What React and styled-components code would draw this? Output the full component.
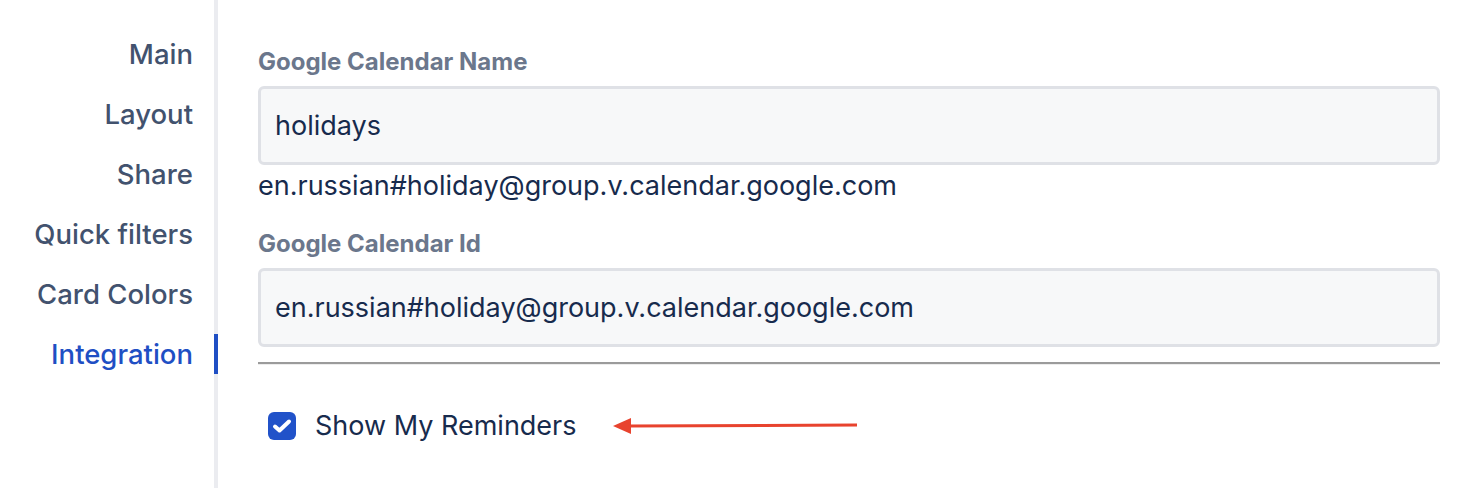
import React from "react";
import styled, { createGlobalStyle } from "styled-components";

const Global = createGlobalStyle`
  html, body { margin: 0; padding: 0; background: #fff; }
  body { font-family: Inter, "Noto Sans", "Liberation Sans", sans-serif; }
`;

const Page = styled.div`
  display: flex;
  min-height: 488px;
  width: 1476px;
`;

const Sidebar = styled.nav`
  width: 214px;
  flex: none;
  display: flex;
  flex-direction: column;
  gap: 20px;
  padding-top: 34px;
  border-right: 4px solid #ebecf0;
  box-sizing: content-box;
`;

const NavItem = styled.div`
  height: 40px;
  display: flex;
  align-items: center;
  justify-content: flex-end;
  padding-right: 21px;
  margin-right: ${p => (p.$active ? "-4px" : "0")};
  border-right: ${p => (p.$active ? "4px solid #1f4fc4" : "none")};
  font-size: 27.5px;
  font-weight: 500;
  color: ${p => (p.$active ? "#1f4fc4" : "#42526e")};
`;

const Content = styled.main`
  flex: 1;
  padding: 47px 36px 0 40px;
  display: flex;
  flex-direction: column;
`;

const Label = styled.label`
  font-size: 24px;
  font-weight: 700;
  color: #6b778c;
  line-height: 30px;
  margin-bottom: 9px;
`;

const Input = styled.div`
  height: 79px;
  flex: none;
  box-sizing: border-box;
  border: 3px solid #dfe1e6;
  border-radius: 6px;
  background: #f7f8f9;
  display: flex;
  align-items: center;
  padding: 0 14px;
  font-size: 27px;
  color: #172b4d;
`;

const Helper = styled.div`
  font-size: 27px;
  color: #172b4d;
  line-height: 34px;
  margin-top: 4px;
  margin-bottom: 26px;
`;

const Separator = styled.hr`
  margin: 15px 0 0;
  flex: none;
  border: none;
  height: 2px;
  background: #9b9b9b;
  box-shadow: 0 1px 0 #ededed;
`;

const CheckRow = styled.div`
  display: flex;
  align-items: center;
  margin-top: 45px;
  padding-left: 10px;
`;

const Box = styled.span`
  width: 28px;
  height: 28px;
  border-radius: 6px;
  background: #2152c9;
  display: inline-flex;
  align-items: center;
  justify-content: center;
  flex: none;
`;

const CheckText = styled.span`
  margin-left: 19px;
  font-size: 27px;
  color: #172b4d;
`;

const Arrow = styled.svg`
  margin-left: 36px;
  flex: none;
`;

export default function App() {
  const items = ["Main", "Layout", "Share", "Quick filters", "Card Colors", "Integration"];
  return (
    <>
      <Global />
      <Page>
        <Sidebar>
          {items.map(t => (
            <NavItem key={t} $active={t === "Integration"}>{t}</NavItem>
          ))}
        </Sidebar>
        <Content>
          <Label>Google Calendar Name</Label>
          <Input>holidays</Input>
          <Helper>en.russian#holiday@group.v.calendar.google.com</Helper>
          <Label>Google Calendar Id</Label>
          <Input>en.russian#holiday@group.v.calendar.google.com</Input>
          <Separator />
          <CheckRow>
            <Box>
              <svg width="20" height="16" viewBox="0 0 20 16">
                <path d="M3 8.5 L7.5 12.5 L17 3.5" fill="none" stroke="#fff" strokeWidth="4" strokeLinecap="round" strokeLinejoin="round" />
              </svg>
            </Box>
            <CheckText>Show My Reminders</CheckText>
            <Arrow width="244" height="20" viewBox="0 0 244 20">
              <path d="M0 10 L18 2 L18 18 Z" fill="#e8432e" />
              <line x1="16" y1="10" x2="244" y2="9" stroke="#e8432e" strokeWidth="3" />
            </Arrow>
          </CheckRow>
        </Content>
      </Page>
    </>
  );
}
